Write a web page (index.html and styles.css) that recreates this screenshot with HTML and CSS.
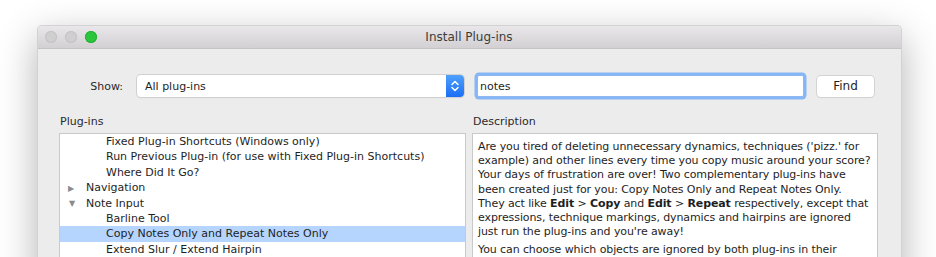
FILE: index.html
```html
<!DOCTYPE html>
<html lang="en">
  <head>
    <meta charset="UTF-8" />
    <title>Install Plug-ins</title>
    <link rel="stylesheet" href="styles.css">
  </head>
  <body>
    <div class="window">
      <!-- Title bar -->
      <div class="titlebar">
        <div class="lights">
          <span class="light"></span>
          <span class="light"></span>
          <span class="light green"></span>
        </div>
        <div class="title">Install Plug-ins</div>
      </div>

      <div class="content">
        <!-- Search row -->
        <div class="toolbar">
          <label class="show-label">Show:</label>
          <div class="select">
            <span>All plug-ins</span>
            <span class="stepper">
              <svg width="10" height="14" viewBox="0 0 10 14">
                <path d="M2 5.5 L5 2.5 L8 5.5 M2 8.5 L5 11.5 L8 8.5" fill="none" stroke="#fff" stroke-width="1.5" stroke-linecap="round" stroke-linejoin="round"/>
              </svg>
            </span>
          </div>
          <div class="search"><span>notes</span></div>
          <button class="find">Find</button>
        </div>

        <!-- Lists -->
        <div class="panes">
          <div class="pane">
            <div class="pane-label">Plug-ins</div>
            <ul class="tree">
              <li class="child">Fixed Plug-in Shortcuts (Windows only)</li>
              <li class="child">Run Previous Plug-in (for use with Fixed Plug-in Shortcuts)</li>
              <li class="child">Where Did It Go?</li>
              <li class="group"><span class="arrow">&#9654;</span>Navigation</li>
              <li class="group"><span class="arrow down">&#9654;</span>Note Input</li>
              <li class="child">Barline Tool</li>
              <li class="child selected">Copy Notes Only and Repeat Notes Only</li>
              <li class="child">Extend Slur / Extend Hairpin</li>
            </ul>
          </div>
          <div class="pane">
            <div class="pane-label">Description</div>
            <div class="description">
              <p>
                Are you tired of deleting unnecessary dynamics, techniques ('pizz.' for<br>
                example) and other lines every time you copy music around your score?<br>
                Your days of frustration are over! Two complementary plug-ins have<br>
                been created just for you: Copy Notes Only and Repeat Notes Only.<br>
                They act like <b>Edit</b> &gt; <b>Copy</b> and <b>Edit</b> &gt; <b>Repeat</b> respectively, except that<br>
                expressions, technique markings, dynamics and hairpins are ignored<br>
                just run the plug-ins and you're away!
              </p>
              <p>
                You can choose which objects are ignored by both plug-ins in their
              </p>
            </div>
          </div>
        </div>
      </div>
    </div>
  </body>
</html>
```

FILE: styles.css
```css
/* Page and window */
body {
  margin: 0;
  background: #fff;
  font-family: "DejaVu Sans", sans-serif;
  font-size: 11px;
  color: #1e1e1e;
  overflow: hidden;
  height: 257px;
}

.window {
  margin: 25px 34px 0 37px;
  height: 260px;
  background: #ececec;
  border: 1px solid #d2d2d2;
  border-bottom: none;
  border-radius: 5px 5px 0 0;
  box-shadow: 0 12px 38px rgba(0, 0, 0, 0.3);
  overflow: hidden;
}

/* Title bar */
.titlebar {
  height: 22px;
  display: flex;
  align-items: center;
  background: linear-gradient(#e9e7e9, #d2d0d2);
  border-bottom: 1px solid #c4c2c4;
}

.lights {
  display: flex;
  gap: 8px;
  padding-left: 7px;
}

.light {
  width: 12px;
  height: 12px;
  border-radius: 50%;
  background: #d0cfd0;
  box-shadow: inset 0 0 0 1px #c3c2c3;
}

.light.green {
  background: #2bc63d;
  box-shadow: inset 0 0 0 1px #22b032;
}

.title {
  flex: 1;
  text-align: center;
  font-size: 12px;
  color: #3c3c3c;
  margin-right: 60px;
}

/* Content */
.content {
  padding: 0 23px 0 21px;
}

.toolbar {
  display: flex;
  align-items: center;
  height: 26px;
  margin-top: 24px;
}

.show-label {
  width: 64px;
  text-align: right;
  padding-right: 14px;
  color: #2a2a2a;
}

.select {
  width: 327px;
  height: 22px;
  box-sizing: border-box;
  display: flex;
  align-items: center;
  justify-content: space-between;
  background: #fff;
  border-radius: 4px;
  box-shadow: 0 0 0 1px #d0d0d0, 0 1px 1px rgba(0, 0, 0, 0.12);
  padding-left: 8px;
}

.stepper {
  width: 18px;
  height: 22px;
  display: flex;
  align-items: center;
  justify-content: center;
  background: linear-gradient(#4fa0fb, #1a6ef5);
  border-radius: 0 4px 4px 0;
}

.search {
  width: 323px;
  height: 20px;
  margin-left: 13px;
  display: flex;
  align-items: center;
  background: #fff;
  border: 1px solid #8eb8f0;
  box-shadow: 0 0 0 2.5px #86b6f6;
  border-radius: 2px;
  padding-left: 2px;
}

.find {
  width: 57px;
  height: 21px;
  margin-left: 13px;
  border: none;
  border-radius: 4px;
  background: #fff;
  box-shadow: 0 0 0 1px #d3d3d3, 0 1px 1px rgba(0, 0, 0, 0.1);
  font-family: inherit;
  font-size: 12px;
  color: #1e1e1e;
}

/* Panes */
.panes {
  display: grid;
  grid-template-columns: 407px 406px;
  gap: 6px;
  margin-top: 16px;
}

.pane-label {
  height: 18px;
  color: #2a2a2a;
  padding-left: 1px;
}

.tree {
  list-style: none;
  margin: 0;
  padding: 0;
  height: 140px;
  background: #fff;
  border: 1px solid #c9c9c9;
}

.tree li {
  height: 15.4px;
  line-height: 15.4px;
  white-space: nowrap;
}

.tree .child {
  padding-left: 46px;
}

.tree .group {
  padding-left: 8px;
}

.tree .selected {
  background: #b5d5fe;
}

.arrow {
  display: inline-block;
  width: 18px;
  font-size: 8px;
  color: #8c8c8c;
}

.arrow.down {
  transform: rotate(90deg);
  width: 8px;
  margin-right: 10px;
}

.description {
  height: 140px;
  background: #fff;
  border: 1px solid #c9c9c9;
  padding: 6px 0 0 5px;
  line-height: 14.2px;
  white-space: nowrap;
  overflow: hidden;
  letter-spacing: -0.1px;
}

.description p {
  margin: 0 0 4px 0;
}
```
